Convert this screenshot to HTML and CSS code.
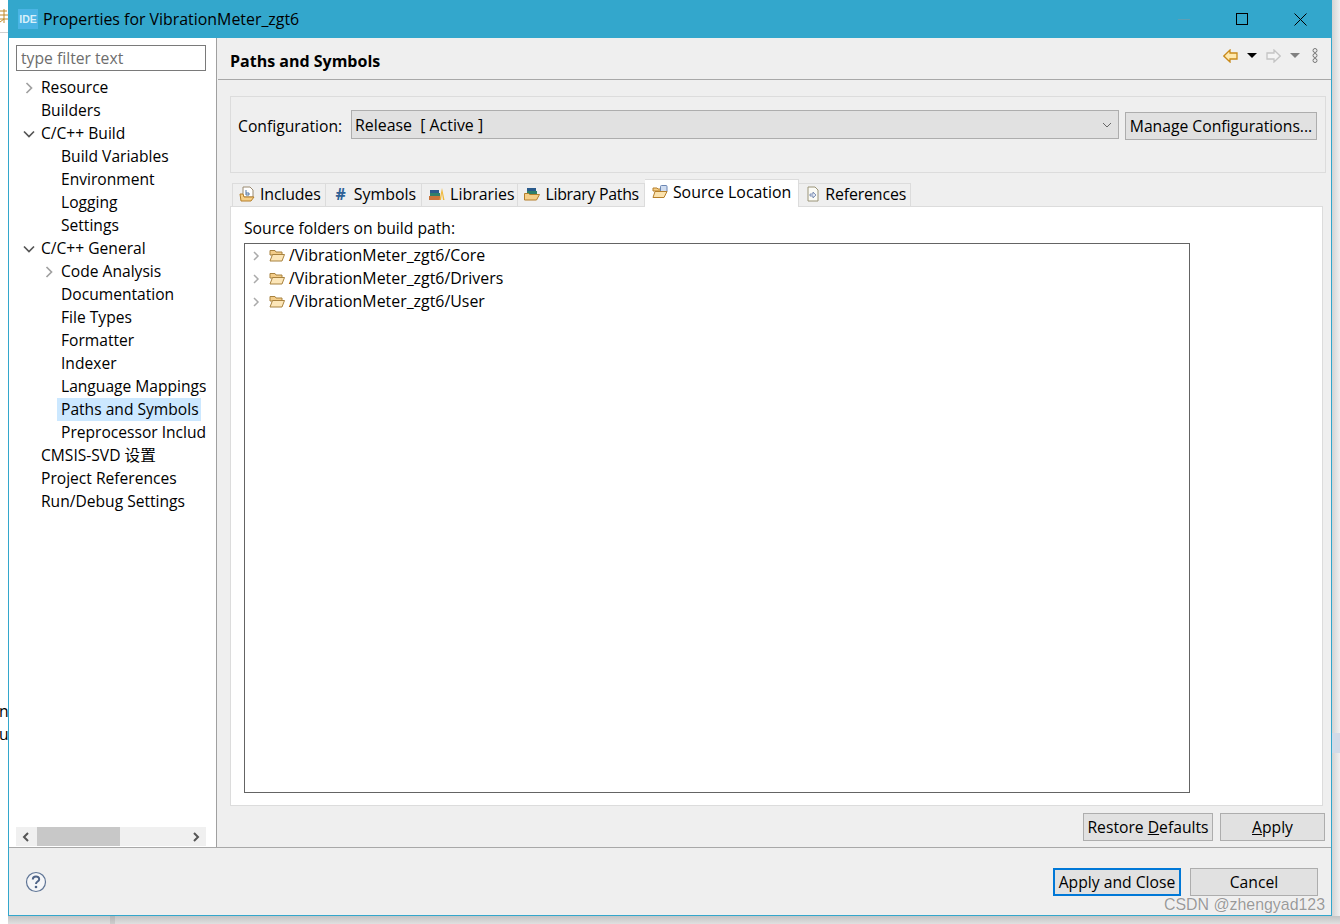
FILE: index.html
```html
<!DOCTYPE html>
<html>
<head>
    <title>Properties for VibrationMeter_zgt6</title>
    <link rel="stylesheet" href="styles.css">
</head>
<body>

    <!-- bits of the window behind the dialog -->
    <svg class="behind-glyph" width="8" height="14" viewBox="0 0 8 14"><path d="M0 2h7M4 0v6M0 6h8M0 10h8M4 6v8M0 13l4-3" stroke="#c08a2a" fill="none"/></svg>
    <div class="behind-line"></div>
    <div class="behind-text first">n</div>
    <div class="behind-text second">u</div>
    <div class="behind-right"><div class="behind-band"></div></div>
    <div class="behind-bottom"><div class="behind-col"></div></div>

    <div class="dialog">
        <!-- title bar -->
        <div class="titlebar">
            <div class="app-icon">IDE</div>
            <div class="title">Properties for VibrationMeter_zgt6</div>
            <div class="win-btns">
                <svg width="12" height="12" viewBox="0 0 12 12"><path d="M0 6.500H12" stroke="#5d9fb5" fill="none"/></svg>
                <svg width="12" height="12" viewBox="0 0 12 12"><rect x=".5" y=".5" width="11" height="11" stroke="#000" fill="none"/></svg>
                <svg width="13" height="13" viewBox="0 0 13 13"><path d="M.5.5l12 12M12.500.5l-12 12" stroke="#000" fill="none"/></svg>
            </div>
        </div>

        <div class="main">
            <!-- left tree -->
            <div class="sidebar">
                <input class="filter" placeholder="type filter text">
                <div class="nav">
                    <div class="nav-row"><svg class="tw" viewBox="0 0 12 12"><path d="M3.500 1l5 5-5 5" stroke="#a0a0a0" stroke-width="1.700" fill="none"/></svg><span>Resource</span></div>
                    <div class="nav-row"><i class="tw"></i><span>Builders</span></div>
                    <div class="nav-row"><svg class="tw" viewBox="0 0 12 12"><path d="M1 3.500l5 5 5-5" stroke="#555" stroke-width="1.700" fill="none"/></svg><span>C/C++ Build</span></div>
                    <div class="nav-row lvl2"><span>Build Variables</span></div>
                    <div class="nav-row lvl2"><span>Environment</span></div>
                    <div class="nav-row lvl2"><span>Logging</span></div>
                    <div class="nav-row lvl2"><span>Settings</span></div>
                    <div class="nav-row"><svg class="tw" viewBox="0 0 12 12"><path d="M1 3.500l5 5 5-5" stroke="#555" stroke-width="1.700" fill="none"/></svg><span>C/C++ General</span></div>
                    <div class="nav-row lvl1b"><svg class="tw" viewBox="0 0 12 12"><path d="M3.500 1l5 5-5 5" stroke="#a0a0a0" stroke-width="1.700" fill="none"/></svg><span>Code Analysis</span></div>
                    <div class="nav-row lvl2"><span>Documentation</span></div>
                    <div class="nav-row lvl2"><span>File Types</span></div>
                    <div class="nav-row lvl2"><span>Formatter</span></div>
                    <div class="nav-row lvl2"><span>Indexer</span></div>
                    <div class="nav-row lvl2"><span>Language Mappings</span></div>
                    <div class="nav-row lvl2"><span class="selected">Paths and Symbols</span></div>
                    <div class="nav-row lvl2"><span>Preprocessor Include Paths</span></div>
                    <div class="nav-row"><i class="tw"></i><span>CMSIS-SVD 设置</span></div>
                    <div class="nav-row"><i class="tw"></i><span>Project References</span></div>
                    <div class="nav-row"><i class="tw"></i><span>Run/Debug Settings</span></div>
                </div>
                <div class="hscroll">
                    <svg class="arrow" viewBox="0 0 10 10"><path d="M7 1L3 5l4 4" stroke="#555" stroke-width="2" fill="none"/></svg>
                    <div class="track"><div class="thumb"></div></div>
                    <svg class="arrow" viewBox="0 0 10 10"><path d="M3 1l4 4-4 4" stroke="#555" stroke-width="2" fill="none"/></svg>
                </div>
            </div>

            <!-- right page -->
            <div class="content">
                <div class="page-head">
                    <h1>Paths and Symbols</h1>
                    <div class="page-tools">
                        <svg width="15" height="14" viewBox="0 0 15 14"><path d="M.8 7L7 1v3h7v6H7v3z" fill="#ffe9ae" stroke="#c98a1b" stroke-width="1.300"/></svg>
                        <svg class="drop" width="10" height="5" viewBox="0 0 10 5"><path d="M0 0h10L5 5z" fill="#000"/></svg>
                        <svg class="fwd" width="15" height="14" viewBox="0 0 15 14"><path d="M14.200 7L8 1v3H1v6h7v3z" fill="#f4f4f4" stroke="#c4c4c4" stroke-width="1.300"/></svg>
                        <svg class="drop" width="10" height="5" viewBox="0 0 10 5"><path d="M0 0h10L5 5z" fill="#808080"/></svg>
                        <svg class="more" width="6" height="15" viewBox="0 0 6 15"><circle cx="3" cy="2.500" r="2" fill="none" stroke="#777"/><circle cx="3" cy="7.500" r="2" fill="none" stroke="#777"/><circle cx="3" cy="12.500" r="2" fill="none" stroke="#777"/></svg>
                    </div>
                </div>

                <div class="config">
                    <label>Configuration:</label>
                    <div class="select">
                        <span>Release&nbsp; [ Active ]</span>
                        <svg width="10" height="6" viewBox="0 0 10 6"><path d="M1 1l4 4 4-4" stroke="#666" fill="none"/></svg>
                    </div>
                    <button class="btn manage">Manage Configurations...</button>
                </div>

                <div class="tabs">
                    <div class="tab">
                        <svg width="16" height="16" viewBox="0 0 16 16"><path d="M4 1h7l3 3v7H4z" fill="#fff" stroke="#9a8a70"/><path d="M7 4v5h3V7H7" stroke="#4f73a0" fill="none"/><path d="M1 8h3l1 3h10l-3 4H2z" fill="#f6cf87" stroke="#b57f2a"/></svg>
                        <span class="snug">Includes</span>
                    </div>
                    <div class="tab symbols"><b>#</b><span>Symbols</span></div>
                    <div class="tab libraries">
                        <svg width="16" height="14" viewBox="0 0 16 14"><path d="M0 9h11v4H0z" fill="#c8743a"/><path d="M1 6h10v3H1z" fill="#2f7f6a"/><path d="M1 3h9v3H1z" fill="#2a5a8c"/><path d="M10.500 13l2.500-12 2.500 12h-1.500l-1-7-1 7z" fill="#f0b93a"/></svg>
                        <span>Libraries</span>
                    </div>
                    <div class="tab library-paths">
                        <svg width="16" height="14" viewBox="0 0 16 14"><path d="M3 1h9v3H3z" fill="#2a5a8c"/><path d="M3 4h10v3H3z" fill="#2f7f6a"/><path d="M.500 6.500h4l1 1h10l-3 5.500H.500z" fill="#f6cf87" stroke="#b57f2a"/></svg>
                        <span class="tight">Library Paths</span>
                    </div>
                    <div class="tab active">
                        <svg width="16" height="14" viewBox="0 0 16 14"><path d="M1 3h4l1 1h6v2H1z" fill="#f6cf87" stroke="#b57f2a"/><rect x="8.500" y=".5" width="6.500" height="6.500" rx="1" fill="#cfdcf0" stroke="#6b86b3"/><path d="M1 12.500L3 6.500h12l-3 6z" fill="#fbe2ad" stroke="#b57f2a"/></svg>
                        <span>Source Location</span>
                    </div>
                    <div class="tab references">
                        <svg width="14" height="16" viewBox="0 0 14 16"><path d="M2 1h7l3 3v11H2z" fill="#fbfbf6" stroke="#9a9478"/><path d="M4 8h3V6l3 3-3 3v-2H4z" fill="#dfe6f2" stroke="#6b7fa8" stroke-width=".8"/></svg>
                        <span class="snug">References</span>
                    </div>
                </div>

                <div class="panel">
                    <div class="panel-label">Source folders on build path:</div>
                    <div class="folders">
                        <div class="folder-row">
                            <svg class="tw-small" viewBox="0 0 8 10"><path d="M2 1l4 4-4 4" stroke="#aaa" stroke-width="1.500" fill="none"/></svg>
                            <svg class="fold" width="16" height="13" viewBox="0 0 16 13"><path d="M1 5V1.500h5L7 3h6v3H1z" fill="#f3cd8a" stroke="#a8823f"/><path d="M1 12L3.500 5.500h12L13 12z" fill="#fce6b8" stroke="#a8823f"/></svg>
                            <span>/VibrationMeter_zgt6/Core</span>
                        </div>
                        <div class="folder-row">
                            <svg class="tw-small" viewBox="0 0 8 10"><path d="M2 1l4 4-4 4" stroke="#aaa" stroke-width="1.500" fill="none"/></svg>
                            <svg class="fold" width="16" height="13" viewBox="0 0 16 13"><path d="M1 5V1.500h5L7 3h6v3H1z" fill="#f3cd8a" stroke="#a8823f"/><path d="M1 12L3.500 5.500h12L13 12z" fill="#fce6b8" stroke="#a8823f"/></svg>
                            <span>/VibrationMeter_zgt6/Drivers</span>
                        </div>
                        <div class="folder-row">
                            <svg class="tw-small" viewBox="0 0 8 10"><path d="M2 1l4 4-4 4" stroke="#aaa" stroke-width="1.500" fill="none"/></svg>
                            <svg class="fold" width="16" height="13" viewBox="0 0 16 13"><path d="M1 5V1.500h5L7 3h6v3H1z" fill="#f3cd8a" stroke="#a8823f"/><path d="M1 12L3.500 5.500h12L13 12z" fill="#fce6b8" stroke="#a8823f"/></svg>
                            <span>/VibrationMeter_zgt6/User</span>
                        </div>
                    </div>
                </div>

                <div class="page-btns">
                    <button class="btn restore">Restore <u>D</u>efaults</button>
                    <button class="btn apply"><u>A</u>pply</button>
                </div>
            </div>
        </div>

        <div class="footer">
            <svg class="help" width="22" height="22" viewBox="0 0 22 22"><circle cx="11" cy="11" r="9.500" fill="#f5f6f8" stroke="#5f7596" stroke-width="1.200"/><path d="M7.800 8.500c0-4 6.400-4 6.400-.3 0 2.400-3.200 2.300-3.200 4.800" fill="none" stroke="#4f6487" stroke-width="2"/><circle cx="11" cy="16" r="1.300" fill="#4f6487"/></svg>
            <button class="btn primary">Apply and Close</button>
            <button class="btn cancel">Cancel</button>
        </div>
    </div>

    <div class="watermark">CSDN @zhengyad123</div>
</body>
</html>
```

FILE: styles.css
```css
html, body {
    margin: 0;
    height: 924px;
    overflow: hidden;
}

body {
    font-family: 'Open Sans', 'Noto Sans CJK SC', sans-serif;
    font-size: 15.7px;
    color: #000;
    background-color: #fff;
    padding: 0 8px;
    position: relative;
}

/* window behind the dialog */
.behind-glyph {
    position: absolute;
    left: 0;
    top: 9px;
}

.behind-line {
    position: absolute;
    left: 0;
    top: 32px;
    width: 8px;
    height: 1px;
    background-color: #d0d0d0;
}

.behind-text {
    position: absolute;
    left: 0;
    width: 8px;
    overflow: hidden;
    line-height: 23px;
}

.behind-text.first {
    top: 700px;
    text-indent: -1px;
}

.behind-text.second {
    top: 723px;
    text-indent: -1px;
}

.behind-right {
    position: absolute;
    left: 1332px;
    top: 0;
    width: 8px;
    height: 924px;
    background: linear-gradient(to right, #d4d4d4, #f0f0f0);
}

.behind-band {
    position: relative;
    top: 733px;
    height: 20px;
    background-color: #d2dbe8;
}

.behind-bottom {
    position: absolute;
    left: 8px;
    top: 916px;
    width: 1332px;
    height: 8px;
    background: linear-gradient(to bottom, #c4c4c4, #e0e0e0);
}

.behind-col {
    margin-left: 102px;
    width: 5px;
    height: 8px;
    background-color: rgba(0, 0, 0, 0.08);
}

.dialog {
    position: relative;
    width: 1324px;
    height: 916px;
    box-sizing: border-box;
    border: 1px solid #33a7cc;
    border-top: none;
    background-color: #efefef;
    display: flex;
    flex-direction: column;
}

/* title bar */
.titlebar {
    height: 38px;
    flex: none;
    background-color: #33a7cc;
    display: flex;
    align-items: center;
    padding-left: 9px;
}

.app-icon {
    width: 20px;
    height: 20px;
    background-color: #4ab4e4;
    color: #d8f0fa;
    font-family: 'Liberation Sans', sans-serif;
    font-size: 10.5px;
    font-weight: bold;
    text-align: center;
    line-height: 20px;
    margin-right: 5px;
}

.title {
    font-size: 15.9px;
    flex: 1;
}

.win-btns {
    display: flex;
    align-items: center;
    gap: 46px;
    padding-right: 24px;
}

.main {
    flex: 1;
    display: flex;
    min-height: 0;
}

/* left tree */
.sidebar {
    width: 208px;
    flex: none;
    background-color: #fff;
    border-right: 1px solid #a0a0a0;
    padding: 7px 10px 1px 7px;
    box-sizing: border-box;
    display: flex;
    flex-direction: column;
}

.filter {
    height: 26px;
    box-sizing: border-box;
    width: 190px;
    flex: none;
    border: 1px solid #7a7a7a;
    padding: 0 4px;
    font: inherit;
}

.filter::placeholder {
    color: #6d6d6d;
    opacity: 1;
}

.nav {
    flex: 1;
    margin-top: 5px;
    overflow: hidden;
    font-size: 15.6px;
}

.nav-row {
    height: 23px;
    line-height: 23px;
    white-space: nowrap;
    display: flex;
    align-items: center;
    padding-left: 7px;
}

.tw {
    width: 12px;
    height: 12px;
    flex: none;
    margin-right: 6px;
}

.lvl2 {
    padding-left: 45px;
}

.lvl1b {
    padding-left: 27px;
}

.selected {
    background-color: #cce8ff;
    padding: 0 2px 0 4px;
    margin-left: -4px;
    display: block;
}

.hscroll {
    height: 19px;
    flex: none;
    background-color: #f0f0f0;
    display: flex;
    align-items: center;
}

.arrow {
    width: 10px;
    height: 10px;
    flex: none;
    margin: 0 5px;
}

.track {
    flex: 1;
    height: 19px;
}

.thumb {
    width: 83px;
    height: 19px;
    margin-left: 1px;
    background-color: #c8c8c8;
}

/* right page */
.content {
    flex: 1;
    min-width: 0;
    display: flex;
    flex-direction: column;
    padding-left: 1px;
}

.page-head {
    height: 41px;
    flex: none;
    border-bottom: 1px solid #a8a8a8;
    display: flex;
    align-items: center;
    justify-content: space-between;
    padding-left: 12px;
}

h1 {
    font-size: 16px;
    font-weight: bold;
    margin: 4px 0 0;
}

.page-tools {
    display: flex;
    align-items: center;
    gap: 9px;
    padding-right: 13px;
    margin-top: -6px;
}

.more {
    margin-left: 3px;
}

.config {
    height: 77px;
    flex: none;
    box-sizing: border-box;
    margin: 16px 5px 0 12px;
    background-color: #efefef;
    border: 1px solid #dcdcdc;
    display: flex;
    align-items: flex-start;
    padding: 13px 8px 0 7px;
}

.config label {
    width: 113px;
    line-height: 33px;
    flex: none;
}

.select {
    flex: 1;
    height: 29px;
    box-sizing: border-box;
    border: 1px solid #adadad;
    background-color: #e1e1e1;
    display: flex;
    align-items: center;
    justify-content: space-between;
    padding: 0 6px 0 3px;
    font-size: 15.9px;
}

.btn {
    font: inherit;
    color: #000;
    background-color: #e1e1e1;
    border: 1px solid #adadad;
    border-radius: 0;
    height: 28px;
    padding: 0;
    box-sizing: border-box;
    white-space: nowrap;
}

.manage {
    width: 192px;
    flex: none;
    margin: 2px 0 0 6px;
}

/* tabs */
.tabs {
    display: flex;
    align-items: flex-end;
    height: 27px;
    flex: none;
    margin: 6px 0 0 14px;
    position: relative;
    z-index: 1;
    font-size: 15.9px;
}

.tab {
    height: 23px;
    box-sizing: border-box;
    border: 1px solid #dcdcdc;
    border-bottom: none;
    border-left: none;
    background-color: #efefef;
    display: flex;
    align-items: center;
    gap: 5px;
    padding: 0 4px 2px 6px;
    white-space: nowrap;
}

.tab:first-child {
    border-left: 1px solid #dcdcdc;
}

.tab b {
    color: #2f6196;
    margin: 0 3px 0 4px;
}

.tab .snug {
    letter-spacing: -0.15px;
}

.tab .tight {
    letter-spacing: -0.3px;
}

.symbols {
    padding-right: 5px;
}

.libraries {
    padding: 0 3px 2px 7px;
}

.library-paths {
    padding-right: 5px;
}

.references {
    padding-left: 7px;
}

.tab.active {
    height: 28px;
    background-color: #fff;
    padding: 0 7px 4px 7px;
    margin-bottom: -1px;
}

.panel {
    flex: 1;
    min-height: 0;
    margin: 0 8px 0 12px;
    box-sizing: border-box;
    background-color: #fff;
    border: 1px solid #dcdcdc;
    display: flex;
    flex-direction: column;
    padding: 11px 132px 12px 13px;
}

.panel-label {
    height: 25px;
    line-height: 20px;
    flex: none;
}

.folders {
    flex: 1;
    border: 1px solid #646464;
    font-size: 15.9px;
}

.folder-row {
    height: 23px;
    display: flex;
    align-items: center;
    padding-left: 7px;
}

.folder-row span {
    margin-top: -2px;
}

.tw-small {
    width: 8px;
    height: 10px;
    flex: none;
    margin-right: 9px;
}

.fold {
    flex: none;
    margin-right: 4px;
}

.page-btns {
    height: 41px;
    flex: none;
    display: flex;
    align-items: center;
    justify-content: flex-end;
    gap: 7px;
    padding-right: 6px;
}

.restore {
    width: 130px;
}

.apply {
    width: 105px;
}

/* footer */
.footer {
    height: 68px;
    flex: none;
    box-sizing: border-box;
    border-top: 1px solid #a8a8a8;
    display: flex;
    align-items: flex-start;
    padding: 20px 13px 0 16px;
}

.help {
    margin: 3px auto 0 0;
}

.primary {
    width: 128px;
    border: 2px solid #0078d7;
}

.cancel {
    width: 128px;
    margin-left: 9px;
}

.watermark {
    position: absolute;
    left: 1164px;
    top: 896px;
    font-family: 'Liberation Sans', sans-serif;
    font-size: 15.9px;
    color: rgba(120, 120, 120, 0.75);
    text-shadow: 0 0 1px #fff;
}
```
